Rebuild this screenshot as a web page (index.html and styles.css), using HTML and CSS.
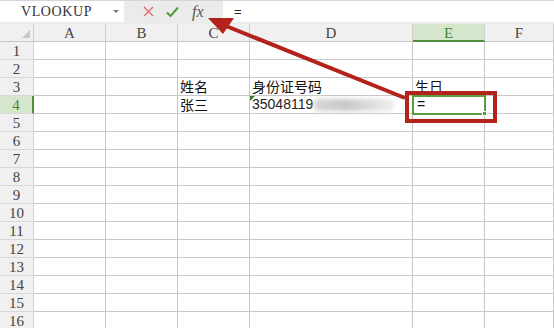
FILE: index.html
```html
<!DOCTYPE html>
<html lang="zh-CN">
    <head>
        <meta charset="UTF-8" />
        <title>VLOOKUP</title>
        <link rel="stylesheet" href="styles.css">
    </head>
    <body>
        <div class="sheet">
            <div class="toolbar">
                <div class="namebox">
                    <span class="namebox__text">VLOOKUP</span>
                    <span class="namebox__arrow"></span>
                </div>
                <div class="actions">
                    <svg class="act" width="11" height="11" viewBox="0 0 11 11">
                        <path d="M1 1 L10 10 M10 1 L1 10" fill="none" stroke="#e06a6a" stroke-width="1.4" />
                    </svg>
                    <svg class="act" width="13" height="12" viewBox="0 0 13 12">
                        <path d="M1 6.5 L4.5 10 L12 1.5" fill="none" stroke="#4c9a3a" stroke-width="2" />
                    </svg>
                    <span class="act act--fx">fx</span>
                </div>
                <div class="formula">=</div>
            </div>

            <div class="grid">
                <div class="hd corner"><span class="corner__tri"></span></div>
                <div class="hd col">A</div>
                <div class="hd col">B</div>
                <div class="hd col">C</div>
                <div class="hd col">D</div>
                <div class="hd col col--active">E</div>
                <div class="hd col">F</div>
            </div>
            <div class="grid rows" id="rows"></div>

            <svg class="callout" width="554" height="328" viewBox="0 0 554 328">
                <rect x="407" y="93" width="88" height="28" fill="none" stroke="#b3231b" stroke-width="4" />
                <line x1="405" y1="98" x2="226" y2="26" stroke="#b3231b" stroke-width="4" />
                <polygon points="208,18 234,18 223,34" fill="#b3231b" />
            </svg>
        </div>

        <script>
            // fill the 16 visible rows, with the few cells that hold data
            const data = {
                "3-3": "姓名",
                "3-4": "身份证号码",
                "3-5": "生日",
                "4-3": "张三",
            };
            const rows = document.getElementById("rows");
            for (let r = 1; r <= 16; r++) {
                const head = document.createElement("div");
                head.className = "hd rownum" + (r === 4 ? " rownum--active" : "");
                head.textContent = r;
                rows.appendChild(head);
                for (let c = 1; c <= 6; c++) {
                    const cell = document.createElement("div");
                    cell.className = "cell";
                    const key = r + "-" + c;
                    if (data[key]) {
                        cell.textContent = data[key];
                    }
                    if (key === "4-4") {
                        cell.classList.add("cell--num");
                        cell.innerHTML = '<span class="flag"></span>35048119<span class="blur"></span>';
                    }
                    if (key === "4-5") {
                        cell.classList.add("cell--active");
                        cell.innerHTML = '=<span class="handle"></span>';
                    }
                    rows.appendChild(cell);
                }
            }
        </script>
    </body>
</html>
```
FILE: styles.css
```css
html {
    box-sizing: border-box;
}

*,
*:before,
*:after {
    box-sizing: inherit;
}

body {
    margin: 0;
    background: #fff;
    font-family: "Liberation Serif", "DejaVu Serif", serif;
    color: #333;
}

.sheet {
    position: relative;
    width: 554px;
    height: 328px;
    overflow: hidden;
}

/* formula bar */
.toolbar {
    display: flex;
    height: 24px;
    background: #ebebeb;
    border-top: 1px solid #d6d6d6;
    padding-bottom: 2px;
}

.namebox {
    display: flex;
    align-items: center;
    width: 124px;
    background: #fff;
    padding: 0 4px 0 0;
}

.namebox__text {
    flex: 1;
    text-align: center;
    font-family: "Liberation Serif", serif;
    font-size: 14px;
    letter-spacing: 0.6px;
    color: #333;
}

.namebox__arrow {
    width: 0;
    height: 0;
    border-left: 3px solid transparent;
    border-right: 3px solid transparent;
    border-top: 3px solid #777;
    margin-right: 1px;
}

.actions {
    display: flex;
    align-items: center;
    width: 99px;
    padding-left: 19px;
    gap: 12px;
}

.act--fx {
    font-family: "Liberation Serif", serif;
    font-style: italic;
    font-size: 16px;
    color: #555;
    margin-left: 1px;
}

.formula {
    flex: 1;
    background: #fff;
    padding-left: 11px;
    font-family: "Liberation Sans", sans-serif;
    font-size: 13px;
    line-height: 21px;
    color: #222;
}

/* grid */
.grid {
    display: grid;
    grid-template-columns: 34px 72px 72px 72px 163px 72px 1fr;
    grid-auto-rows: 18px;
}

.hd {
    background: #f0f0f0;
    color: #444;
    font-family: "Liberation Serif", serif;
    font-size: 15px;
    text-align: center;
    line-height: 18px;
    border-right: 1px solid #cfcfcf;
    border-bottom: 1px solid #c6c6c6;
}

.corner {
    position: relative;
}

.corner__tri {
    position: absolute;
    right: 3px;
    bottom: 3px;
    width: 0;
    height: 0;
    border-left: 8px solid transparent;
    border-bottom: 8px solid #c8c8c8;
}

.col--active {
    background: #d5e6cd;
    color: #3f8a2c;
    border-bottom: 2px solid #4f8f37;
}

.rownum {
    border-bottom: 1px solid #d8d8d8;
}

.rownum--active {
    background: #d5e6cd;
    color: #3f8a2c;
    border-right: 2px solid #4f8f37;
}

.cell {
    position: relative;
    border-right: 1px solid #c8c8c8;
    border-bottom: 1px solid #c8c8c8;
    font-family: "Noto Sans CJK SC", sans-serif;
    font-size: 14px;
    line-height: 17px;
    color: #111;
    padding-left: 2px;
    white-space: nowrap;
}

.cell--num {
    font-family: "Liberation Sans", sans-serif;
    font-size: 14px;
    color: #222;
}

.flag {
    position: absolute;
    left: 0;
    top: 0;
    width: 0;
    height: 0;
    border-top: 5px solid #2f7d2a;
    border-right: 5px solid transparent;
}

.blur {
    display: inline-block;
    vertical-align: middle;
    width: 80px;
    height: 12px;
    margin-left: 1px;
    background: linear-gradient(90deg, #d8d8d8, #c8c8c8 40%, #dcdcdc 70%, #efefef);
    filter: blur(2px);
}

.cell--active {
    outline: 2px solid #5a9c3e;
    outline-offset: -1px;
    font-family: "Liberation Sans", sans-serif;
    padding-left: 4px;
    z-index: 1;
}

.handle {
    position: absolute;
    right: -3px;
    bottom: -3px;
    width: 5px;
    height: 5px;
    background: #5a9c3e;
    border: 1px solid #fff;
}

.callout {
    position: absolute;
    left: 0;
    top: 0;
    pointer-events: none;
}
```
